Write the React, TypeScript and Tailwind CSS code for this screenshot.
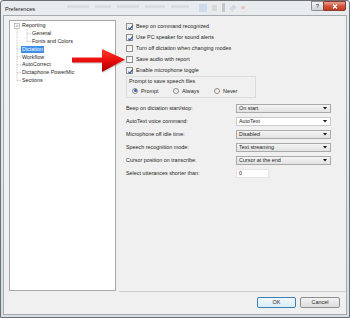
import React from "react";

function CheckBox({ checked }: { checked: boolean }) {
  return (
    <div className="w-[7px] h-[7px] shrink-0 border border-[#8f8f8f] bg-gradient-to-br from-[#e9e9e9] to-[#ffffff] relative">
      {checked && (
        <svg viewBox="0 0 7 7" className="absolute left-[-0.5px] top-[-0.5px] w-[7px] h-[7px]">
          <path d="M1.4 3.6 L2.9 5.2 L5.8 1.4" fill="none" stroke="#3d5a99" strokeWidth="1.3" />
        </svg>
      )}
    </div>
  );
}

function Radio({ checked, label }: { checked: boolean; label: string }) {
  return (
    <div className="w-[47px] flex items-center gap-[3px]">
      <div className="w-[6px] h-[6px] shrink-0 rounded-full border border-[#8f8f8f] bg-gradient-to-br from-[#e4e4e4] to-[#ffffff] flex items-center justify-center">
        {checked && <div className="w-[3px] h-[3px] rounded-full bg-[#2e64b4]" />}
      </div>
      <span>{label}</span>
    </div>
  );
}

function Combo({ value, white }: { value: string; white?: boolean }) {
  return (
    <div
      className={
        white
          ? "w-[95px] h-[9px] border border-[#c9cbcf] bg-white flex items-center pl-[2px] pr-[3px]"
          : "w-[95px] h-[9px] border border-[#a9a9a9] bg-gradient-to-b from-[#f4f4f4] to-[#e2e2e2] flex items-center pl-[2px] pr-[3px]"
      }
    >
      <span className="flex-1 leading-none">{value}</span>
      <svg viewBox="0 0 4 3" className="w-[4px] h-[3px]">
        <path d="M0 0 L4 0 L2 2.5 Z" fill="#111" />
      </svg>
    </div>
  );
}

function TreeRow({ label, indent, selected }: { label: string; indent: number; selected?: boolean }) {
  return (
    <div className="h-[7.8px] flex items-center" style={{ paddingLeft: indent }}>
      {selected ? (
        <span className="bg-[#3d8ee6] text-white px-[1px] h-[7px] flex items-center leading-none">{label}</span>
      ) : (
        <span className="px-[1px] leading-[7px]">{label}</span>
      )}
    </div>
  );
}

export default function App() {
  const checks: [string, boolean][] = [
    ["Beep on command recognized", true],
    ["Use PC speaker for sound alerts", true],
    ["Turn off dictation when changing modes", false],
    ["Save audio with report", false],
    ["Enable microphone toggle", true],
  ];
  const combos: [string, string, boolean?][] = [
    ["Beep on dictation start/stop:", "On start"],
    ["AutoText voice command:", "AutoText", true],
    ["Microphone off idle time:", "Disabled"],
    ["Speech recognition mode:", "Text streaming"],
    ["Cursor position on transcribe:", "Cursor at the end"],
  ];

  return (
    <div className="w-[350px] h-[318px] relative overflow-hidden bg-white">
      <div className="w-[350px] h-[318px] bg-gradient-to-b from-[#e9ecef] to-[#d7dce2] border border-[#6c7075] rounded-t-[3px] flex flex-col font-['Liberation_Sans',Arial,sans-serif] text-[5.4px] text-[#262626]">
        {/* Title bar */}
        <div className="h-[14px] flex items-start relative shrink-0">
          <span className="pl-[4px] pt-[4px] text-[5.6px] text-[#1a1a1a]">Preferences</span>
          <div className="flex items-center gap-[6px] ml-[32px] mt-[4px] opacity-60">
            <div className="w-[22px] h-[3px] bg-[#d2d5d9]" />
            <div className="w-[16px] h-[3px] bg-[#d2d5d9]" />
            <div className="w-[22px] h-[3px] bg-[#cfd3d8]" />
            <div className="w-[20px] h-[3px] bg-[#d2d5d9]" />
            <div className="w-[18px] h-[3px] bg-[#d2d5d9]" />
          </div>
          <div className="flex items-center gap-[5px] ml-[10px] mt-[2px] opacity-70">
            <div className="w-[8px] h-[8px] bg-[#c4d2ea]" />
            <div className="w-[5px] h-[6px] bg-[#cfd2cd]" />
            <div className="w-[3px] h-[9px] bg-[#b5b8bc]" />
            <div className="w-[6px] h-[4px] bg-[#c3cfe2] -rotate-45" />
            <div className="w-[4px] h-[3px] bg-[#ecbcbc]" />
          </div>
          <div className="ml-auto mr-[3px] flex items-start">
            <div className="w-[12px] h-[10px] border border-[#8c9096] border-r-0 rounded-bl-[2px] bg-gradient-to-b from-[#f2f3f5] to-[#cdd2d8] flex items-center justify-center text-[6px] text-[#333] leading-none">
              ?
            </div>
            <div className="w-[23px] h-[10px] border border-[#8a3a30] rounded-br-[2px] bg-gradient-to-b from-[#e8a090] via-[#d2543c] to-[#c23a22] flex items-center justify-center">
              <svg viewBox="0 0 6 5" className="w-[6px] h-[5px]">
                <path d="M1 0.5 L5 4.5 M5 0.5 L1 4.5" stroke="#fff" strokeWidth="1.3" />
              </svg>
            </div>
          </div>
        </div>

        {/* Client area */}
        <div className="flex-1 mx-[2px] mb-[2px] bg-[#f0f0f0] border border-[#a6abb1] flex flex-col">
          <div className="h-[276px] flex shrink-0">
            {/* Tree */}
            <div className="ml-[5px] mt-[4px] w-[107px] h-[271px] bg-white border border-[#a8a8a8] relative pt-[1px]">
              <svg className="absolute left-0 top-0 w-[107px] h-[70px]" viewBox="0 0 107 70">
                <g stroke="#a0a0a0" strokeWidth="0.7" strokeDasharray="0.8 0.8" fill="none">
                  <path d="M7 8 V59.5" />
                  <path d="M7 28.3 H11 M7 36.1 H11 M7 43.9 H11 M7 51.7 H11 M7 59.5 H11" />
                  <path d="M17 8 V20.5 M17 12.7 H21 M17 20.5 H21" />
                </g>
                <rect x="4.5" y="2.5" width="5" height="5" fill="#fff" stroke="#9a9a9a" strokeWidth="0.6" />
                <path d="M5.7 5 H8.3" stroke="#444" strokeWidth="0.6" />
              </svg>
              <div className="relative">
                <TreeRow label="Reporting" indent={11} />
                <TreeRow label="General" indent={21} />
                <TreeRow label="Fonts and Colors" indent={21} />
                <TreeRow label="Dictation" indent={11} selected />
                <TreeRow label="Workflow" indent={11} />
                <TreeRow label="AutoCorrect" indent={11} />
                <TreeRow label="Dictaphone PowerMic" indent={11} />
                <TreeRow label="Sections" indent={11} />
              </div>
            </div>

            {/* Right panel */}
            <div className="ml-[3px] flex-1 h-[276px] border-b border-[#cfcfcf] pl-[7px] pt-[5px] flex flex-col">
              {checks.map(([label, c]) => (
                <div key={label} className="h-[11px] flex items-center gap-[3px]">
                  <CheckBox checked={c} />
                  <span>{label}</span>
                </div>
              ))}
              <div className="w-[130px] h-[22px] border border-[#dcdcdc] flex flex-col">
                <div className="h-[9px] flex items-center pl-[2px]">Prompt to save speech files</div>
                <div className="h-[10px] flex items-center pl-[5px]">
                  <Radio checked label="Prompt" />
                  <Radio checked={false} label="Always" />
                  <Radio checked={false} label="Never" />
                </div>
              </div>
              <div className="mt-[4px] flex flex-col">
                {combos.map(([label, value, white]) => (
                  <div key={label} className="h-[13px] flex items-center">
                    <span className="w-[110px]">{label}</span>
                    <Combo value={value} white={white} />
                  </div>
                ))}
                <div className="h-[13px] flex items-center">
                  <span className="w-[110px]">Select utterances shorter than:</span>
                  <div className="w-[33px] h-[9px] bg-white border border-[#e4e4e4] flex items-center pl-[2px]">0</div>
                </div>
              </div>
            </div>
          </div>

          {/* Buttons */}
          <div className="flex justify-end gap-[4px] pr-[6px] mt-[5px]">
            <div className="w-[39px] h-[11px] border border-[#3c7fb1] rounded-[2px] bg-gradient-to-b from-[#f2f8fc] to-[#d9ecf8] flex items-center justify-center">
              OK
            </div>
            <div className="w-[40px] h-[11px] border border-[#8e8f8f] rounded-[2px] bg-gradient-to-b from-[#f3f3f3] to-[#dcdcdc] flex items-center justify-center">
              Cancel
            </div>
          </div>
        </div>
      </div>

      {/* Red annotation arrow */}
      <svg className="absolute left-[68px] top-[46px] w-[60px] h-[30px]" viewBox="0 0 60 30">
        <defs>
          <linearGradient id="arrowG" x1="0" y1="0" x2="0" y2="1">
            <stop offset="0" stopColor="#ff3a2a" />
            <stop offset="0.55" stopColor="#e50b0b" />
            <stop offset="1" stopColor="#a30000" />
          </linearGradient>
        </defs>
        <polygon
          points="4,11.5 34,11.5 34,3 57,13.5 34,26 34,16.5 4,16.5"
          fill="#000"
          opacity="0.15"
          transform="translate(0.8,1.2)"
        />
        <polygon points="4,11.5 34,11.5 34,3 57,13.5 34,26 34,16.5 4,16.5" fill="url(#arrowG)" />
      </svg>
    </div>
  );
}
